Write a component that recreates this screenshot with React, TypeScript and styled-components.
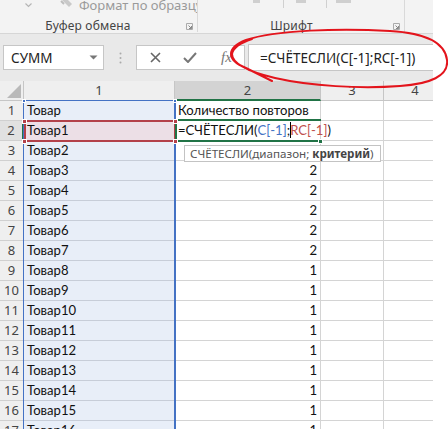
import React from 'react';
import styled, { createGlobalStyle } from 'styled-components';

const UI = `"Noto Sans", "Open Sans", sans-serif`;
const CELL = `Lato, "Noto Sans", sans-serif`;

const GlobalStyle = createGlobalStyle`
  html, body { margin: 0; padding: 0; background: #fff; }
  body { font-family: ${UI}; }
  #root { width: 448px; height: 429px; }
`;

const Page = styled.div`
  position: relative;
  width: 448px;
  height: 429px;
  overflow: hidden;
  background: #fff;
`;

const Sheet = styled.div`
  width: 433px;
  display: flex;
  flex-direction: column;
`;

const Ribbon = styled.div`
  display: flex;
  align-items: flex-start;
  height: 34px;
  flex: none;
  box-sizing: border-box;
  background: #f3f3f3;
  border-bottom: 1px solid #d6d6d6;
`;

const Group = styled.div<{ $w: number }>`
  width: ${(p) => p.$w}px;
  height: 32px;
  flex: none;
  display: flex;
  flex-direction: column;
  box-sizing: border-box;
  border-right: 1px solid #d9d9d9;
`;

const GroupTop = styled.div`
  height: 19px;
  flex: none;
  overflow: hidden;
  display: flex;
  align-items: flex-start;
`;

const TopItem = styled.div<{ $ml: number }>`
  margin-top: -4px;
  margin-left: ${(p) => p.$ml}px;
  display: flex;
  align-items: center;
  height: 18px;
  color: #9a9a9a;
  font-size: 13px;
  line-height: 18px;
  white-space: nowrap;
`;

const TopSep = styled.div<{ $ml: number }>`
  width: 1px;
  height: 8px;
  background: #d0d0d0;
  margin-left: ${(p) => p.$ml}px;
`;

const TopBlock = styled.div<{ $ml: number; $w: number }>`
  width: ${(p) => p.$w}px;
  height: 3px;
  background: #cfcfcf;
  margin-left: ${(p) => p.$ml}px;
`;

const LabelRow = styled.div`
  height: 13px;
  flex: none;
  display: grid;
  grid-template-columns: 1fr auto;
  align-items: center;
`;

const GroupLabel = styled.div<{ $pr: number }>`
  text-align: center;
  padding-right: ${(p) => p.$pr}px;
  font-size: 12px;
  color: #444;
  line-height: 13px;
  letter-spacing: 0.2px;
`;

const Launcher = styled.svg`
  width: 7px;
  height: 7px;
  margin-right: 4px;
  margin-top: 2px;
`;

const FormulaBar = styled.div`
  height: 47px;
  flex: none;
  box-sizing: border-box;
  background: #e9e9e9;
  display: flex;
  align-items: center;
  padding-left: 3px;
`;

const NameBox = styled.div`
  width: 101px;
  height: 25px;
  box-sizing: border-box;
  background: #fff;
  border: 1px solid #c6c6c6;
  display: flex;
  align-items: center;
  justify-content: space-between;
  padding: 0 5px 0 7px;
  font-size: 13.5px;
  color: #222;
`;

const Dots = styled.div`
  width: 32px;
  display: flex;
  justify-content: center;
`;

const FxBox = styled.div`
  width: 109px;
  height: 25px;
  box-sizing: border-box;
  background: #fff;
  border: 1px solid #c6c6c6;
  display: flex;
  align-items: center;
  padding-left: 13px;
  gap: 22px;
`;

const Fx = styled.span`
  font-family: "Liberation Serif", serif;
  font-style: italic;
  font-size: 15px;
  color: #777;
  margin-left: 2px;
`;

const FormulaInput = styled.div`
  flex: 1;
  margin-left: 3px;
  height: 27px;
  box-sizing: border-box;
  background: #fff;
  border: 1px solid #c6c6c6;
  border-right: none;
  display: flex;
  align-items: center;
  padding-left: 11px;
  font-size: 13.5px;
  color: #222;
  white-space: nowrap;
`;

const Grid = styled.div`
  position: relative;
  display: grid;
  grid-template-columns: 24px 151px 146px 63px 63px;
  grid-auto-rows: 20px;
  width: 433px;
  height: 348px;
  overflow: hidden;
`;

const Corner = styled.div`
  background: #efefef;
  border-right: 1px solid #c6c6c6;
  border-bottom: 1px solid #c6c6c6;
  box-sizing: border-box;
  display: flex;
  align-items: flex-end;
  justify-content: flex-end;
  padding: 0 2px 2px 0;
`;

const ColHead = styled.div<{ $sel?: boolean }>`
  box-sizing: border-box;
  background: ${(p) => (p.$sel ? '#d3d3d3' : '#efefef')};
  border-right: 1px solid #c6c6c6;
  border-bottom: ${(p) => (p.$sel ? '2px solid #217346' : '1px solid #c6c6c6')};
  text-align: center;
  font-size: 13px;
  line-height: 19px;
  color: #444;
`;

const RowHead = styled.div<{ $sel?: boolean }>`
  box-sizing: border-box;
  background: ${(p) => (p.$sel ? '#e1e1e1' : '#efefef')};
  border-right: ${(p) => (p.$sel ? '2px solid #217346' : '1px solid #c6c6c6')};
  border-bottom: 1px solid #d0d0d0;
  text-align: center;
  font-size: 13px;
  line-height: 19px;
  color: #444;
`;

const Cell = styled.div<{ $bg?: string; $line?: string; $right?: boolean }>`
  box-sizing: border-box;
  background: ${(p) => p.$bg || 'transparent'};
  border-right: 1px solid ${(p) => p.$line || '#d4d4d4'};
  border-bottom: 1px solid ${(p) => p.$line || '#d4d4d4'};
  font-family: ${CELL};
  font-size: 13.1px;
  line-height: 19px;
  color: #111;
  padding: 0 3px;
  white-space: nowrap;
  text-align: ${(p) => (p.$right ? 'right' : 'left')};
  overflow: visible;
  position: relative;
  z-index: 1;
`;

const Ref = styled.span<{ $c: string }>`
  color: ${(p) => p.$c};
`;

const Caret = styled.span`
  display: inline-block;
  width: 1px;
  height: 16px;
  background: #000;
  vertical-align: -3px;
  margin: 0 -0.5px;
`;

const Range = styled.div<{ $c: string; $l: number; $t: number; $w: number; $h: number; $bw: string }>`
  position: absolute;
  left: ${(p) => p.$l}px;
  top: ${(p) => p.$t}px;
  width: ${(p) => p.$w}px;
  height: ${(p) => p.$h}px;
  box-sizing: border-box;
  border-style: solid;
  border-color: ${(p) => p.$c};
  border-width: ${(p) => p.$bw};
  z-index: 2;
  pointer-events: none;
`;

const Handle = styled.div<{ $c: string; $x: number; $y: number; $s?: number }>`
  position: absolute;
  left: ${(p) => p.$x - (p.$s || 5) / 2}px;
  top: ${(p) => p.$y - (p.$s || 5) / 2}px;
  width: ${(p) => p.$s || 5}px;
  height: ${(p) => p.$s || 5}px;
  background: ${(p) => p.$c};
  border: 1px solid #fff;
  box-sizing: border-box;
  z-index: 3;
`;

const Tooltip = styled.div`
  position: absolute;
  left: 184px;
  top: 64px;
  height: 17px;
  box-sizing: border-box;
  background: #fff;
  border: 1px solid #c3c3c3;
  padding: 0 6px 0 5px;
  font-size: 11.6px;
  line-height: 15px;
  color: #555;
  white-space: nowrap;
  z-index: 4;
`;

const Bold = styled.b`
  font-weight: 700;
  color: #444;
`;

const Annotation = styled.svg`
  position: absolute;
  left: 0;
  top: 0;
  width: 448px;
  height: 100px;
  pointer-events: none;
  z-index: 10;
`;

const BLUE = '#4472c4';
const RED = '#b3414a';
const GREEN = '#217346';

const values: Record<number, string> = {};
for (let r = 4; r <= 8; r++) values[r] = '2';
for (let r = 9; r <= 17; r++) values[r] = '1';

export default function App() {
  const rows = Array.from({ length: 17 }, (_, i) => i + 1);
  return (
    <Page>
      <GlobalStyle />
      <Sheet>
        <Ribbon>
          <Group $w={198}>
            <GroupTop>
              <TopItem $ml={24}>
                <svg width="9" height="6" viewBox="0 0 9 6">
                  <path d="M1.5 1.5 L4.5 4.5 L7.5 1.5" fill="none" stroke="#b5b5b5" strokeWidth="1.2" />
                </svg>
              </TopItem>
              <TopItem $ml={26}>
                <svg width="15" height="14" viewBox="0 0 15 14">
                  <path d="M3 2 L10 9 L13 6 L6 -1 Z" fill="#c9c9c9" />
                  <path d="M2 3 L5 6" stroke="#bdbdbd" strokeWidth="2" />
                </svg>
                <span style={{ marginLeft: 5 }}>Формат по образцу</span>
              </TopItem>
            </GroupTop>
            <LabelRow>
              <GroupLabel $pr={10}>Буфер обмена</GroupLabel>
              <Launcher viewBox="0 0 7 7">
                <path d="M0.5 6.5 V0.5 H6.5 V6.5 Z" fill="none" stroke="#aaa" strokeWidth="1" />
                <path d="M2.5 2.5 L5.5 5.5 M5.5 3 V5.5 H3" fill="none" stroke="#888" strokeWidth="1" />
              </Launcher>
            </LabelRow>
          </Group>
          <Group $w={207}>
            <GroupTop>
              <TopBlock $ml={55} $w={7} />
              <TopSep $ml={23} />
              <TopBlock $ml={12} $w={10} />
              <TopSep $ml={20} />
              <TopBlock $ml={9} $w={15} />
            </GroupTop>
            <LabelRow>
              <GroupLabel $pr={8}>Шрифт</GroupLabel>
              <Launcher viewBox="0 0 7 7">
                <path d="M0.5 6.5 V0.5 H6.5 V6.5 Z" fill="none" stroke="#aaa" strokeWidth="1" />
                <path d="M2.5 2.5 L5.5 5.5 M5.5 3 V5.5 H3" fill="none" stroke="#888" strokeWidth="1" />
              </Launcher>
            </LabelRow>
          </Group>
        </Ribbon>

        <FormulaBar>
          <NameBox>
            <span>СУММ</span>
            <svg width="9" height="5" viewBox="0 0 9 5">
              <path d="M0.5 0.5 H8.5 L4.5 4.5 Z" fill="#777" />
            </svg>
          </NameBox>
          <Dots>
            <svg width="3" height="12" viewBox="0 0 3 12">
              <circle cx="1.5" cy="1.5" r="1" fill="#aaa" />
              <circle cx="1.5" cy="6" r="1" fill="#aaa" />
              <circle cx="1.5" cy="10.5" r="1" fill="#aaa" />
            </svg>
          </Dots>
          <FxBox>
            <svg width="11" height="11" viewBox="0 0 11 11">
              <path d="M1 1 L10 10 M10 1 L1 10" stroke="#666" strokeWidth="1.6" />
            </svg>
            <svg width="14" height="11" viewBox="0 0 14 11">
              <path d="M1 6 L5 10 L13 1" fill="none" stroke="#777" strokeWidth="2" />
            </svg>
            <Fx>fx</Fx>
          </FxBox>
          <FormulaInput>=СЧЁТЕСЛИ(C[-1];RC[-1])</FormulaInput>
        </FormulaBar>

        <Grid>
          <Corner>
            <svg width="14" height="14" viewBox="0 0 14 14">
              <path d="M14 0 L14 14 L0 14 Z" fill="#b9b9b9" />
            </svg>
          </Corner>
          <ColHead>1</ColHead>
          <ColHead $sel>2</ColHead>
          <ColHead>3</ColHead>
          <ColHead>4</ColHead>

          {rows.map((r) => (
            <React.Fragment key={r}>
              <RowHead $sel={r === 2}>{r}</RowHead>
              <Cell $bg={r === 2 ? '#ecdfe6' : '#e8eef8'} $line="#c7cdd8">
                {r === 1 ? 'Товар' : `Товар${r - 1}`}
              </Cell>
              {r === 1 ? (
                <Cell>Количество повторов</Cell>
              ) : r === 2 ? (
                <Cell>
                  =СЧЁТЕСЛИ(<Ref $c="#4472c4">C[-1]</Ref>;<Caret />
                  <Ref $c="#c0504d">RC[-1]</Ref>)
                </Cell>
              ) : (
                <Cell $right>{values[r] || ''}</Cell>
              )}
              <Cell />
              <Cell />
            </React.Fragment>
          ))}

          <Range $c={BLUE} $l={23} $t={19} $w={153} $h={340} $bw="1px 2px 0 1px" />
          <Handle $c={BLUE} $x={24} $y={20} $s={4} />
          <Handle $c={BLUE} $x={175} $y={20} $s={4} />

          <Range $c={RED} $l={24} $t={39} $w={152} $h={22} $bw="2px" />
          <Handle $c={RED} $x={24} $y={40} />
          <Handle $c={RED} $x={175} $y={40} />
          <Handle $c={RED} $x={24} $y={60} />
          <Handle $c={RED} $x={175} $y={60} />

          <Range $c={GREEN} $l={175} $t={38} $w={146} $h={23} $bw="2px 0 2px 2px" />
          <Handle $c={GREEN} $x={320} $y={60} />

          <Tooltip>
            СЧЁТЕСЛИ(диапазон; <Bold>критерий</Bold>)
          </Tooltip>
        </Grid>
      </Sheet>

      <Annotation viewBox="0 0 448 100">
        <path
          d="M272 81 C262 76, 252 71, 246 68 C226 60, 226 48, 246 40 C275 30, 340 28, 390 31 C425 33, 445 42, 447 60 C449 76, 430 84, 400 86 C360 89, 310 86, 275 78 C250 72, 232 64, 232 54 C233 47, 240 43, 252 39"
          fill="none"
          stroke="#e3141c"
          strokeWidth="2"
          strokeLinecap="round"
        />
      </Annotation>
    </Page>
  );
}
